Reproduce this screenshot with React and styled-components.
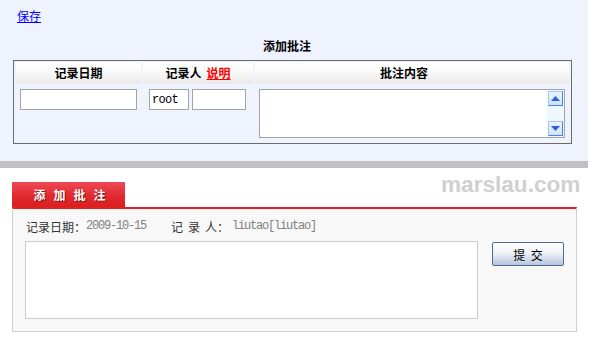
import React from "react";
import styled, { createGlobalStyle } from "styled-components";

const Global = createGlobalStyle`
  html, body { margin: 0; padding: 0; background: #fff; }
  body { font-family: "Noto Sans CJK SC", "DejaVu Sans", sans-serif; font-size: 12px; color: #000; }
  * { box-sizing: border-box; }
`;

const Page = styled.div`
  width: 588px;
`;

const TopPanel = styled.div`
  height: 161px;
  background: #eef3fe;
  display: flex;
  flex-direction: column;
`;

const SaveLink = styled.a`
  align-self: flex-start;
  margin: 9px 0 0 17px;
  line-height: 14px;
  font-size: 12px;
  color: #0000ff;
  text-decoration: underline;
  cursor: pointer;
`;

const Title = styled.div`
  margin-top: 16px;
  line-height: 14px;
  text-align: center;
  font-weight: 700;
  padding-right: 14px;
`;

const Table = styled.div`
  margin: 7px 0 0 13px;
  width: 559px;
  border: 1px solid #6b6b6b;
  padding: 1px 2px;
  display: grid;
  grid-template-columns: 125px 110px 314px;
  grid-template-rows: 22px 56px;
  gap: 2px;
`;

const HeaderCell = styled.div`
  background: linear-gradient(#ffffff, #fafafa 40%, #e9e9e9);
  font-weight: 700;
  display: flex;
  align-items: center;
  justify-content: center;
  padding-right: ${(p) => p.$shift || 0}px;
  line-height: 14px;
`;

const RedLink = styled.a`
  color: #ff0000;
  text-decoration: underline;
  margin-left: 5px;
`;

const BodyCell = styled.div`
  display: flex;
  align-items: flex-start;
  gap: 3px;
  padding-top: 3px;
  padding-left: ${(p) => p.$inset}px;
`;

const TextInput = styled.input`
  width: ${(p) => p.$w}px;
  height: 21px;
  border: 1px solid #a5a5a5;
  background: #fff;
  padding: 0 2px;
  font-family: "Liberation Mono", monospace;
  font-size: 12px;
  letter-spacing: -0.7px;
  color: #000;
  outline: none;
`;

const MemoBox = styled.div`
  width: 306px;
  height: 49px;
  border: 1px solid #a5a5a5;
  background: #fff;
  display: flex;
`;

const MemoArea = styled.textarea`
  flex: 1;
  border: none;
  resize: none;
  outline: none;
  background: transparent;
  font-family: "Noto Sans CJK SC", sans-serif;
  font-size: 12px;
`;

const ScrollTrack = styled.div`
  width: 17px;
  background: #eef8ff;
  display: flex;
  flex-direction: column;
  justify-content: space-between;
  padding: 1px;
`;

const ScrollBtn = styled.div`
  width: 15px;
  height: 15px;
  border: 1px solid #4f7fe8;
  border-top-color: #a9c4f5;
  border-left-color: #a9c4f5;
  background: linear-gradient(#eaf4ff, #cfe3fb);
  display: flex;
  align-items: center;
  justify-content: center;
`;

const Band = styled.div`
  height: 7px;
  background: #c1c1c3;
`;

const Bottom = styled.div`
  position: relative;
  background: #fff;
  padding: 14px 0 0 12px;
  height: 176px;
`;

const Watermark = styled.div`
  position: absolute;
  left: 441px;
  top: 6px;
  font-family: "Liberation Sans", Arial, sans-serif;
  font-weight: 700;
  font-size: 22.6px;
  line-height: 22px;
  color: #d0d0d0;
`;

const Tab = styled.div`
  width: 113px;
  height: 25px;
  background: linear-gradient(#ee4a55, #e12a30 55%, #d81f21);
  color: #fff;
  font-weight: 700;
  font-size: 12px;
  word-spacing: 5.3px;
  display: flex;
  align-items: center;
  justify-content: center;
  padding-left: 2px;
  text-shadow: 1px 1px 0 #8d1414;
`;

const Box = styled.div`
  width: 565px;
  height: 125px;
  border: 1px solid #d0d0d0;
  border-top: 2px solid #e3211f;
  background: #f8f8f8;
  padding: 9px 12px 12px 12px;
  display: flex;
  flex-direction: column;
  gap: 7px;
`;

const InfoRow = styled.div`
  display: flex;
  align-items: center;
  height: 16px;
  margin-left: 1px;
  color: #333;
`;

const Label = styled.span`
  margin-left: ${(p) => p.$gap || 0}px;
  word-spacing: 2.3px;
`;

const Value = styled.span`
  font-family: "Liberation Mono", monospace;
  font-size: 12px;
  letter-spacing: -1.2px;
  color: #808080;
  margin-left: ${(p) => p.$gap || 0}px;
`;

const FormRow = styled.div`
  display: flex;
  align-items: flex-start;
  gap: 14px;
`;

const NoteArea = styled.textarea`
  width: 453px;
  height: 78px;
  border: 1px solid #cccccc;
  background: #fff;
  resize: none;
  outline: none;
`;

const SubmitButton = styled.button`
  margin-top: 1px;
  width: 72px;
  height: 24px;
  border: 1px solid #4d6a98;
  border-radius: 2px;
  background: linear-gradient(#ffffff, #eef2f8 45%, #b7c5dc);
  font-family: "Noto Sans CJK SC", sans-serif;
  font-size: 12px;
  color: #000;
  word-spacing: 3px;
  padding: 0;
  cursor: pointer;
`;

const Arrow = ({ up }) => (
  <svg width="9" height="5" viewBox="0 0 9 5">
    {up ? (
      <polygon points="4.5,0 9,5 0,5" fill="#2f5fe0" />
    ) : (
      <polygon points="0,0 9,0 4.5,5" fill="#2f5fe0" />
    )}
  </svg>
);

export default function App() {
  return (
    <Page>
      <Global />
      <TopPanel>
        <SaveLink>保存</SaveLink>
        <Title>添加批注</Title>
        <Table>
          <HeaderCell>记录日期</HeaderCell>
          <HeaderCell>
            记录人<RedLink>说明</RedLink>
          </HeaderCell>
          <HeaderCell $shift={16}>批注内容</HeaderCell>
          <BodyCell $inset={4}>
            <TextInput $w={117} />
          </BodyCell>
          <BodyCell $inset={6}>
            <TextInput $w={40} defaultValue="root" />
            <TextInput $w={54} />
          </BodyCell>
          <BodyCell $inset={4}>
            <MemoBox>
              <MemoArea />
              <ScrollTrack>
                <ScrollBtn>
                  <Arrow up />
                </ScrollBtn>
                <ScrollBtn>
                  <Arrow />
                </ScrollBtn>
              </ScrollTrack>
            </MemoBox>
          </BodyCell>
        </Table>
      </TopPanel>
      <Band />
      <Bottom>
        <Watermark>marslau.com</Watermark>
        <Tab>添 加 批 注</Tab>
        <Box>
          <InfoRow>
            <Label>记录日期：</Label>
            <Value>2009-10-15</Value>
            <Label $gap={25}>记 录 人：</Label>
            <Value $gap={3}>liutao[liutao]</Value>
          </InfoRow>
          <FormRow>
            <NoteArea />
            <SubmitButton>提 交</SubmitButton>
          </FormRow>
        </Box>
      </Bottom>
    </Page>
  );
}
